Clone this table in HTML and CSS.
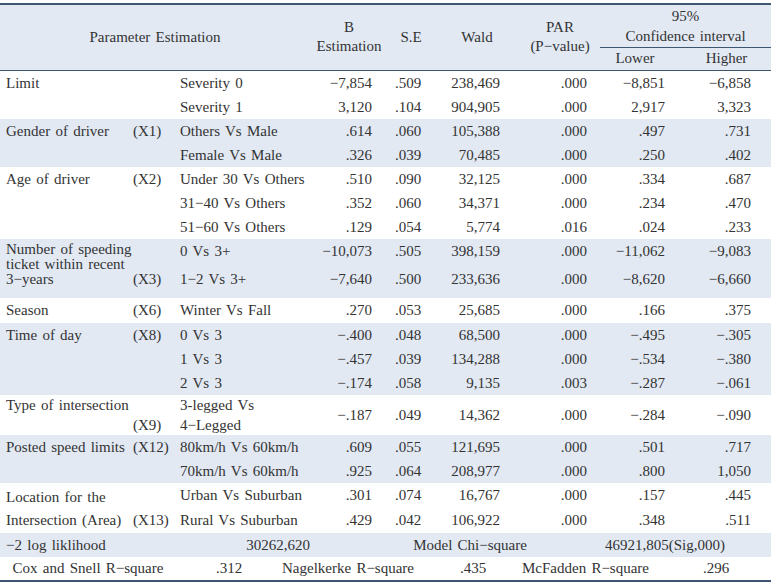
FILE: index.html
```html
<!DOCTYPE html>
<html>
<head>
<meta charset="utf-8">
<link rel="stylesheet" href="styles.css">
</head>
<body>
<table class="tbl">
  <colgroup>
    <col class="w-lab"><col class="w-cmp"><col class="w-b"><col class="w-se"><col class="w-wald"><col class="w-par"><col class="w-lo"><col class="w-hi">
  </colgroup>
  <thead>
    <tr class="h1">
      <th colspan="2" rowspan="2">Parameter Estimation</th>
      <th rowspan="2">B<br>Estimation</th>
      <th rowspan="2">S.E</th>
      <th rowspan="2">Wald</th>
      <th rowspan="2">PAR<br>(P−value)</th>
      <th colspan="2" class="ci">95%<br>Confidence interval</th>
    </tr>
    <tr class="h2">
      <th class="hlo">Lower</th>
      <th class="hhi">Higher</th>
    </tr>
  </thead>

  <tbody>
    <tr>
      <td class="lab" rowspan="2"><div class="line"><span>Limit</span></div></td>
      <td class="cmp">Severity 0</td><td class="b">−7,854</td><td class="se">.509</td><td class="w">238,469</td><td class="p">.000</td><td class="lo">−8,851</td><td class="hi">−6,858</td>
    </tr>
    <tr>
      <td class="cmp">Severity 1</td><td class="b">3,120</td><td class="se">.104</td><td class="w">904,905</td><td class="p">.000</td><td class="lo">2,917</td><td class="hi">3,323</td>
    </tr>
  </tbody>

  <tbody class="band">
    <tr>
      <td class="lab" rowspan="2"><div class="line"><span>Gender of driver</span><span class="code">(X1)</span></div></td>
      <td class="cmp">Others Vs Male</td><td class="b">.614</td><td class="se">.060</td><td class="w">105,388</td><td class="p">.000</td><td class="lo">.497</td><td class="hi">.731</td>
    </tr>
    <tr>
      <td class="cmp">Female Vs Male</td><td class="b">.326</td><td class="se">.039</td><td class="w">70,485</td><td class="p">.000</td><td class="lo">.250</td><td class="hi">.402</td>
    </tr>
  </tbody>

  <tbody>
    <tr>
      <td class="lab" rowspan="3"><div class="line"><span>Age of driver</span><span class="code">(X2)</span></div></td>
      <td class="cmp">Under 30 Vs Others</td><td class="b">.510</td><td class="se">.090</td><td class="w">32,125</td><td class="p">.000</td><td class="lo">.334</td><td class="hi">.687</td>
    </tr>
    <tr>
      <td class="cmp">31−40 Vs Others</td><td class="b">.352</td><td class="se">.060</td><td class="w">34,371</td><td class="p">.000</td><td class="lo">.234</td><td class="hi">.470</td>
    </tr>
    <tr>
      <td class="cmp">51−60 Vs Others</td><td class="b">.129</td><td class="se">.054</td><td class="w">5,774</td><td class="p">.016</td><td class="lo">.024</td><td class="hi">.233</td>
    </tr>
  </tbody>

  <tbody class="band">
    <tr class="n1">
      <td class="lab lab-num" rowspan="2">
        <div class="line"><span>Number of speeding</span></div>
        <div class="line"><span>ticket within recent</span></div>
        <div class="line"><span>3−years</span><span class="code">(X3)</span></div>
      </td>
      <td class="cmp">0 Vs 3+</td><td class="b">−10,073</td><td class="se">.505</td><td class="w">398,159</td><td class="p">.000</td><td class="lo">−11,062</td><td class="hi">−9,083</td>
    </tr>
    <tr class="n2">
      <td class="cmp">1−2 Vs 3+</td><td class="b">−7,640</td><td class="se">.500</td><td class="w">233,636</td><td class="p">.000</td><td class="lo">−8,620</td><td class="hi">−6,660</td>
    </tr>
  </tbody>

  <tbody>
    <tr class="tall">
      <td class="lab"><div class="line"><span>Season</span><span class="code">(X6)</span></div></td>
      <td class="cmp">Winter Vs Fall</td><td class="b">.270</td><td class="se">.053</td><td class="w">25,685</td><td class="p">.000</td><td class="lo">.166</td><td class="hi">.375</td>
    </tr>
  </tbody>

  <tbody class="band">
    <tr>
      <td class="lab" rowspan="3"><div class="line"><span>Time of day</span><span class="code">(X8)</span></div></td>
      <td class="cmp">0 Vs 3</td><td class="b">−.400</td><td class="se">.048</td><td class="w">68,500</td><td class="p">.000</td><td class="lo">−.495</td><td class="hi">−.305</td>
    </tr>
    <tr>
      <td class="cmp">1 Vs 3</td><td class="b">−.457</td><td class="se">.039</td><td class="w">134,288</td><td class="p">.000</td><td class="lo">−.534</td><td class="hi">−.380</td>
    </tr>
    <tr>
      <td class="cmp">2 Vs 3</td><td class="b">−.174</td><td class="se">.058</td><td class="w">9,135</td><td class="p">.003</td><td class="lo">−.287</td><td class="hi">−.061</td>
    </tr>
  </tbody>

  <tbody>
    <tr class="two">
      <td class="lab lab-two">
        <div class="line"><span>Type of intersection</span></div>
        <div class="line"><span></span><span class="code">(X9)</span></div>
      </td>
      <td class="cmp cmp-two">3-legged Vs<br>4−Legged</td><td class="b">−.187</td><td class="se">.049</td><td class="w">14,362</td><td class="p">.000</td><td class="lo">−.284</td><td class="hi">−.090</td>
    </tr>
  </tbody>

  <tbody class="band">
    <tr>
      <td class="lab" rowspan="2"><div class="line"><span>Posted speed limits</span><span class="code">(X12)</span></div></td>
      <td class="cmp">80km/h Vs 60km/h</td><td class="b">.609</td><td class="se">.055</td><td class="w">121,695</td><td class="p">.000</td><td class="lo">.501</td><td class="hi">.717</td>
    </tr>
    <tr>
      <td class="cmp">70km/h Vs 60km/h</td><td class="b">.925</td><td class="se">.064</td><td class="w">208,977</td><td class="p">.000</td><td class="lo">.800</td><td class="hi">1,050</td>
    </tr>
  </tbody>

  <tbody>
    <tr class="tall">
      <td class="lab lab-loc" rowspan="2">
        <div class="line"><span>Location for the</span></div>
        <div class="line"><span>Intersection (Area)</span><span class="code">(X13)</span></div>
      </td>
      <td class="cmp">Urban Vs Suburban</td><td class="b">.301</td><td class="se">.074</td><td class="w">16,767</td><td class="p">.000</td><td class="lo">.157</td><td class="hi">.445</td>
    </tr>
    <tr class="tall">
      <td class="cmp">Rural Vs Suburban</td><td class="b">.429</td><td class="se">.042</td><td class="w">106,922</td><td class="p">.000</td><td class="lo">.348</td><td class="hi">.511</td>
    </tr>
  </tbody>

  <tbody class="band">
    <tr>
      <td colspan="8" class="full">
        <div class="fit">
          <span class="fit-lab">−2 log liklihood</span>
          <span class="fit-c">30262,620</span>
          <span class="fit-c">Model Chi−square</span>
          <span class="fit-c">46921,805(Sig,000)</span>
        </div>
      </td>
    </tr>
  </tbody>

  <tbody>
    <tr class="last">
      <td colspan="8" class="full">
        <div class="rsq">
          <span class="rs-a">Cox and Snell R−square</span>
          <span class="rs-b">.312</span>
          <span class="rs-c">Nagelkerke R−square</span>
          <span class="rs-d">.435</span>
          <span class="rs-e">McFadden R−square</span>
          <span class="rs-f">.296</span>
        </div>
      </td>
    </tr>
  </tbody>
</table>
</body>
</html>
```

FILE: styles.css
```css
* { box-sizing: border-box; }

body {
  margin: 0;
  background: #ffffff;
  font-family: "Liberation Serif", "Times New Roman", serif;
  font-size: 15px;
  color: #333333;
  word-spacing: 1.5px;
}

.tbl {
  width: 771px;
  margin-top: 3px;
  border-collapse: collapse;
  table-layout: fixed;
  border-top: 2px solid #3e5670;
  border-bottom: 2px solid #3e5670;
}

.w-lab { width: 176px; }
.w-cmp { width: 134px; }
.w-b { width: 78px; }
.w-se { width: 46px; }
.w-wald { width: 86px; }
.w-par { width: 80px; }
.w-lo { width: 82px; }
.w-hi { width: 89px; }

/* header */
thead th {
  font-weight: normal;
  line-height: 19px;
  padding: 0;
  text-align: center;
  vertical-align: middle;
  background: #e2e9f3;
  border-bottom: 1px solid #3e5670;
  white-space: nowrap;
}
.h1 th { height: 43px; }
.h2 th { height: 23px; }
.ci { line-height: 20px; }
.hlo { padding-right: 12px !important; }

/* body */
td {
  padding: 0;
  height: 24px;
  line-height: 24px;
  vertical-align: middle;
  white-space: nowrap;
}
.band td { background: #e2e9f3; }

.lab {
  vertical-align: top;
  padding: 0 5px 0 6px;
}
.line {
  display: flex;
  justify-content: space-between;
}
.code {
  width: 38px;
  flex: none;
  text-align: left;
}

.cmp { padding-left: 4px; }
.b { text-align: right; padding-right: 16px; }
.se { text-align: center; padding-right: 6px; }
.w { text-align: right; padding-right: 20px; }
.p { text-align: right; padding-right: 13px; }
.lo { text-align: right; padding-right: 17px; }
.hi { text-align: right; padding-right: 20px; }

/* number-of-tickets group */
.n1 td { height: 26px; vertical-align: top; }
.n2 td { height: 33px; vertical-align: top; padding-top: 2px; }
.lab-num { padding-top: 3px !important; line-height: 15px; }
.n1 .lab-num { vertical-align: top; }

.tall td { height: 25px; }

.two td { height: 39px; }
.lab-two { line-height: 20px; }
.cmp-two { line-height: 20px; }

.lab-loc { line-height: 23px; padding-top: 3px !important; }

/* footer rows */
.full { padding: 0; }
.fit {
  display: grid;
  grid-template-columns: 200px 156px 228px 162px;
  line-height: 24px;
}
.fit-lab { padding-left: 6px; }
.fit-c { text-align: center; }

.last td { height: 23px; line-height: 23px; }
.rsq {
  display: grid;
  grid-template-columns: 176px 106px 178px 62px 181px 1fr;
}
.rs-a { text-align: center; }
.rs-b { justify-self: center; }
.rs-c, .rs-d, .rs-e, .rs-f { justify-self: start; }
```
